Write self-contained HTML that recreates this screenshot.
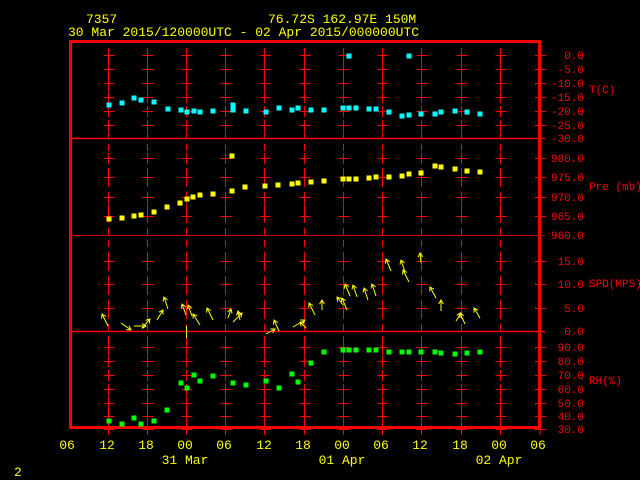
<!DOCTYPE html>
<html><head><meta charset="utf-8"><style>
html,body{margin:0;padding:0;background:#000;width:640px;height:480px;overflow:hidden}
svg{display:block}
text{font-family:"Liberation Mono",monospace;font-size:13px}
.s{font-size:11px}
</style></head><body>
<svg width="640" height="480" viewBox="0 0 640 480" xmlns="http://www.w3.org/2000/svg">
<g fill="#ffff00">
<text x="86" y="23">7357</text>
<text x="268" y="23">76.72S  162.97E   150M</text>
<text x="68" y="36">30 Mar 2015/120000UTC - 02 Apr 2015/000000UTC</text>
<g text-anchor="middle">
<text x="67" y="449">06</text><text x="107" y="449">12</text><text x="146" y="449">18</text><text x="185" y="449">00</text><text x="224" y="449">06</text><text x="264" y="449">12</text><text x="303" y="449">18</text><text x="342" y="449">00</text><text x="381" y="449">06</text><text x="420" y="449">12</text><text x="460" y="449">18</text><text x="499" y="449">00</text><text x="538" y="449">06</text>
<text x="185" y="464">31 Mar</text><text x="342" y="464">01 Apr</text><text x="499" y="464">02 Apr</text>
</g>
<text x="14" y="476">2</text>
</g>
<g stroke="#ff0000" fill="none">
<rect x="70.5" y="41.5" width="469" height="386" stroke-width="3"/>
<line x1="70" y1="138.5" x2="545" y2="138.5" stroke-width="1.5"/>
<line x1="70" y1="235.5" x2="545" y2="235.5" stroke-width="1" stroke="#c00"/>
<line x1="70" y1="331.5" x2="545" y2="331.5" stroke-width="1.5"/>
<g stroke-width="1" stroke-dasharray="7,5">
<line x1="108.5" y1="48" x2="108.5" y2="427"/><line x1="147.5" y1="48" x2="147.5" y2="427"/><line x1="186.5" y1="48" x2="186.5" y2="427"/><line x1="225.5" y1="48" x2="225.5" y2="427"/><line x1="264.5" y1="48" x2="264.5" y2="427"/><line x1="304.5" y1="48" x2="304.5" y2="427"/><line x1="343.5" y1="48" x2="343.5" y2="427"/><line x1="382.5" y1="48" x2="382.5" y2="427"/><line x1="421.5" y1="48" x2="421.5" y2="427"/><line x1="461.5" y1="48" x2="461.5" y2="427"/><line x1="500.5" y1="48" x2="500.5" y2="427"/>
</g>
</g>
<g id="tk" stroke="#ff0000" stroke-width="1"></g>
<g fill="#ff0000" text-anchor="end">
<text class="s" x="584" y="59">0.0</text><text class="s" x="584" y="73">-5.0</text><text class="s" x="584" y="87">-10.0</text><text class="s" x="584" y="101">-15.0</text><text class="s" x="584" y="115">-20.0</text><text class="s" x="584" y="129">-25.0</text><text class="s" x="584" y="142">-30.0</text>
<text class="s" x="584" y="162">980.0</text><text class="s" x="584" y="181">975.0</text><text class="s" x="584" y="201">970.0</text><text class="s" x="584" y="220">965.0</text><text class="s" x="584" y="239">960.0</text>
<text class="s" x="584" y="265">15.0</text><text class="s" x="584" y="288">10.0</text><text class="s" x="584" y="312">5.0</text><text class="s" x="584" y="335">0.0</text>
<text class="s" x="584" y="351">90.0</text><text class="s" x="584" y="365">80.0</text><text class="s" x="584" y="379">70.0</text><text class="s" x="584" y="393">60.0</text><text class="s" x="584" y="407">50.0</text><text class="s" x="584" y="420">40.0</text><text class="s" x="584" y="433">30.0</text>
</g>
<g fill="#ff0000">
<text class="s" x="589" y="93">T(C)</text><text class="s" x="589" y="190">Pre (mb)</text><text class="s" x="589" y="287">SPD(MPS)</text><text class="s" x="589" y="384">RH(%)</text>
</g>
<g id="pts"></g>
<g id="arr" stroke="#ffff00" stroke-width="1" fill="none"></g>
<script>
var ns="http://www.w3.org/2000/svg";
var xs=[108.5,147.5,186.5,225.5,264.5,304.5,343.5,382.5,421.5,461.5,500.5,540];
var ys=[55,69,83,97,111,125,158,177,197,216,261,284,308,347,361,375,389,403,416,429];
var tk=document.getElementById('tk'),d="";
xs.forEach(function(x){ys.forEach(function(y){d+="M"+(x-5)+" "+(y+.5)+"h11M"+x+" "+(y-5)+"v11";});});
var p=document.createElementNS(ns,'path');p.setAttribute('d',d);tk.appendChild(p);
var P=document.getElementById('pts');
function sq(c,a){a.forEach(function(q){var r=document.createElementNS(ns,'rect');r.setAttribute('x',q[0]-2.5);r.setAttribute('y',q[1]-2.5);r.setAttribute('width',5);r.setAttribute('height',5);r.setAttribute('fill',c);P.appendChild(r);});}
sq('#00ffff',[[109,105],[122,103],[134,98],[141,100],[154,102],[168,109],[181,110],[187,112],[194,111],[200,112],[213,111],[233,105],[233,110],[246,111],[266,112],[279,108],[292,110],[298,108],[311,110],[324,110],[343,108],[349,108],[356,108],[369,109],[376,109],[389,112],[402,116],[409,115],[421,114],[435,114],[441,112],[455,111],[467,112],[480,114],[349,56],[409,56]]);
sq('#ffff00',[[109,219],[122,218],[134,216],[141,215],[154,212],[167,207],[180,203],[187,199],[193,197],[200,195],[213,194],[232,191],[245,187],[232,156],[265,186],[278,185],[292,184],[298,183],[311,182],[324,181],[343,179],[349,179],[356,179],[369,178],[376,177],[389,177],[402,176],[409,174],[421,173],[435,166],[441,167],[455,169],[467,171],[480,172]]);
sq('#00ff00',[[109,421],[122,424],[134,418],[141,424],[154,421],[167,410],[181,383],[187,388],[194,375],[200,381],[213,376],[233,383],[246,385],[266,381],[279,388],[292,374],[298,382],[311,363],[324,352],[343,350],[349,350],[356,350],[369,350],[376,350],[389,352],[402,352],[409,352],[421,352],[435,352],[441,353],[455,354],[467,353],[480,352]]);
var A=document.getElementById('arr'),ad="";
[[108,326,102,314],[121,323,131,330],[134,326,146,326],[142,328,150,319],[157,320,163,310],[168,309,164,297],[186,315,182,304],[192,316,188,305],[200,325,193,314],[213,320,207,308],[228,318,231,309],[233,322,242,313],[240,320,238,311],[266,334,275,329],[279,331,274,320],[293,327,305,320],[306,328,300,322],[315,315,309,303],[322,310,322,300],[347,310,342,298],[343,305,337,297],[350,296,345,284],[357,297,353,285],[368,300,364,288],[376,296,372,284],[391,271,386,259],[405,272,401,260],[409,282,403,270],[421,263,420,253],[436,298,430,287],[441,311,441,300],[465,324,460,313],[456,321,461,313],[480,318,474,308]].forEach(function(a){
var dx=a[2]-a[0],dy=a[3]-a[1],L=Math.sqrt(dx*dx+dy*dy),ux=dx/L,uy=dy/L,h=4;
ad+="M"+a[0]+" "+a[1]+"L"+a[2]+" "+a[3];
ad+="M"+(a[2]-h*ux+h*.6*uy)+" "+(a[3]-h*uy-h*.6*ux)+"L"+a[2]+" "+a[3]+"L"+(a[2]-h*ux-h*.6*uy)+" "+(a[3]-h*uy+h*.6*ux);});
ad+="M186.5 326v12";
var q=document.createElementNS(ns,'path');q.setAttribute('d',ad);A.appendChild(q);
</script>
</svg>
</body></html>
